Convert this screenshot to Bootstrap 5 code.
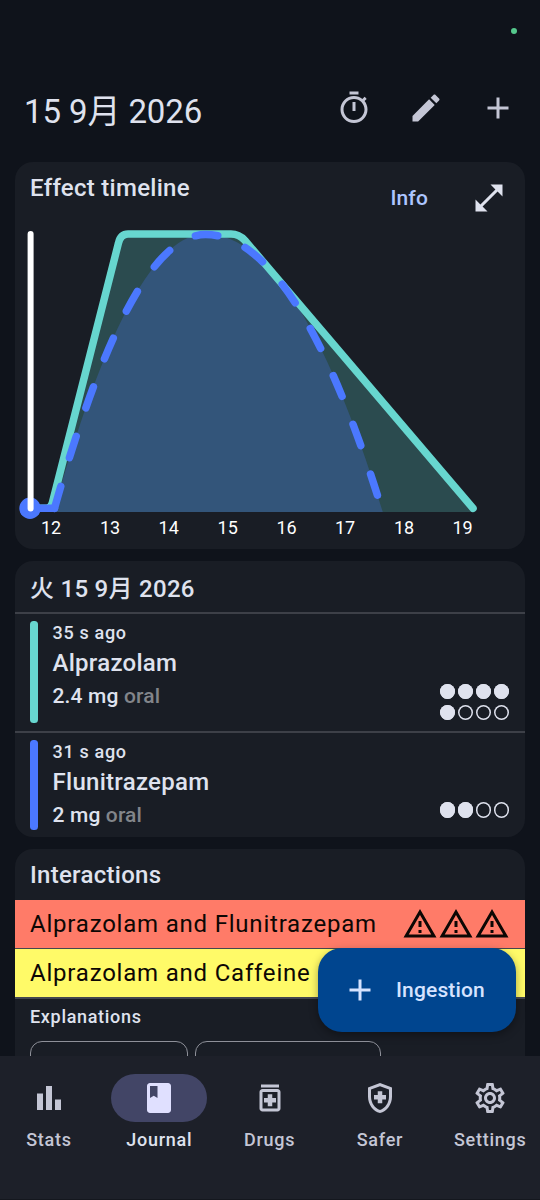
<!DOCTYPE html>
<html lang="en">
<head>
<meta charset="utf-8">
<meta name="viewport" content="width=device-width, initial-scale=1">
<title>Journal</title>
<link rel="stylesheet" href="https://cdn.jsdelivr.net/npm/bootstrap@5.3.0/dist/css/bootstrap.min.css">
<style>
  body { background:#0f131b; color:#dfe2ee; font-family:Roboto,"Noto Sans CJK JP",sans-serif; font-size:24px; line-height:36px; }
  .screen { height:1200px; }
  .ico { width:36px; height:36px; fill:currentColor; display:block; flex:none; }
  .status { height:54px; padding:28px 23px 0 0; }
  .status i { width:6px; height:6px; border-radius:50%; background:#55c98d; }
  .topbar { height:108px; padding:0 24px; color:#c4c6d5; }
  .topbar h1 { font-size:33px; font-weight:400; line-height:42px; letter-spacing:-.1px; color:#dfe2ee; padding-top:7px; }
  .topbar .actions { gap:36px; }
  .panel { background:#191d25; border-radius:18px; overflow:hidden; }
  .t-title { font-size:24px; font-weight:500; letter-spacing:.28px; line-height:36px; }
  .t-label { font-size:18px; font-weight:500; letter-spacing:.68px; line-height:24px; }
  .t-small { font-size:21px; font-weight:500; letter-spacing:.15px; line-height:30px; }
  .chart-head { height:58px; padding:8px 18px 0 15px; }
  .chart { width:510px; height:329px; display:block; }
  .chart text { font-size:18px; fill:#fff; text-anchor:middle; }
  .day-head { height:51px; padding:10px 15px 0; }
  .dose { border-top:2px solid #3d4048; padding:7px 15px 7.5px; }
  .dose .stripe { width:7.5px; border-radius:3.5px; margin-right:15px; }
  .route { color:#82858a; }
  .dots { display:grid; grid-template-columns:repeat(4,15.5px); gap:5.5px 2.5px; }
  .dots i { width:15.5px; height:15.5px; border-radius:50%; box-shadow:inset 0 0 0 1.5px #dfe2ee; }
  .dots i.on { background:#dfe2ee; }
  .pair { height:48px; padding:0 15px; color:#0d0704; letter-spacing:.79px; }
  .pair.danger { background:#ff7b68; }
  .pair.caution { background:#fffa68; }
  .rule { height:1.5px; background:#44474f; }
  .chip { height:48px; border:1.5px solid #8e9099; border-radius:12px; }
  .fab { right:24px; bottom:168px; width:198px; height:84px; border-radius:24px; background:#00458f; color:#d6e3ff; box-shadow:0 3px 9px rgba(0,0,0,.35); padding-left:24px; gap:18px; }
  .bottom { height:144px; background:#1d2029; color:#c4c6d5; padding-top:18px; border-bottom:1px solid #14171e; }
  .bottom .tabs { display:grid; grid-template-columns:repeat(5,98px); column-gap:12.3px; }
  .bottom .t-label { letter-spacing:.75px; }
  .pill { width:96px; height:48px; border-radius:24px; }
  .active-tab { color:#dfe2ee; }
  .active-tab .pill { background:#424566; color:#e0e0ff; }
</style>
</head>
<body>
<div class="screen position-relative overflow-hidden d-flex flex-column">
  <div class="status d-flex justify-content-end"><i></i></div>
  <header class="topbar d-flex justify-content-between align-items-center">
    <h1 class="mb-0">15 9月 2026</h1>
    <div class="actions d-flex">
      <svg class="ico" viewBox="0 0 24 24"><path d="M15 1H9v2h6V1zm-4 13h2V8h-2v6zm8.03-6.61 1.42-1.42c-.43-.51-.9-.99-1.41-1.41l-1.42 1.42C16.07 4.74 14.12 4 12 4c-4.97 0-9 4.03-9 9s4.02 9 9 9 9-4.03 9-9c0-2.12-.74-4.07-1.97-5.61zM12 20c-3.87 0-7-3.13-7-7s3.13-7 7-7 7 3.13 7 7-3.13 7-7 7z"/></svg>
      <svg class="ico" viewBox="0 0 24 24"><path d="M3 17.25V21h3.75L17.81 9.94l-3.75-3.75L3 17.25zM20.71 7.04c.39-.39.39-1.02 0-1.41l-2.34-2.34c-.39-.39-1.02-.39-1.41 0l-1.83 1.83 3.75 3.75 1.83-1.83z"/></svg>
      <svg class="ico" viewBox="0 0 24 24"><path d="M19 13h-6v6h-2v-6H5v-2h6V5h2v6h6z"/></svg>
    </div>
  </header>

  <main class="d-flex flex-column" style="gap:12px;padding:0 15px">
    <section class="panel flex-shrink-0">
      <div class="chart-head d-flex justify-content-between">
        <div class="t-title">Effect timeline</div>
        <div class="d-flex" style="gap:43px;padding-top:10px">
          <div class="t-small" style="color:#adc6ff;line-height:36px">Info</div>
          <svg class="ico" viewBox="0 0 24 24"><path d="M21 11V3h-8l3.29 3.29-10 10L3 13v8h8l-3.29-3.29 10-10z"/></svg>
        </div>
      </div>
      <svg class="chart" viewBox="15 220 510 329">
        <path fill="#2b4b4f" d="M30 512V508H51L118 246Q121 234 129 234H232Q240 234 246 241L473 508V512Z"/>
        <path fill="#33557a" d="M30 512V508H54.5Q131.5 234 205.500 234Q297 234 381.5 508L382.8 512Z"/>
        <g fill="none" stroke-width="7.5" stroke-linecap="round">
          <path stroke="#67d6cf" d="M30 508.3H46.500Q51 508.300 52.300 503L118.500 243Q120.500 234 128 234H231Q239 234 245 240.500L473 508.300"/>
          <path stroke="#4b78ff" d="M30 508.300H54.500"/>
          <path stroke="#4b78ff" stroke-dasharray="22.500 30" d="M54.500 508.300Q131.500 234.500 205.500 234.500Q297 234.500 381.500 508.300"/>
        </g>
        <circle cx="30" cy="508.300" r="10.700" fill="#4b78ff"/>
        <path d="M30.600 234V508.500" stroke="#fff" stroke-width="6" stroke-linecap="round"/>
        <g>
          <text x="51" y="534">12</text><text x="110" y="534">13</text><text x="168.700" y="534">14</text><text x="227.700" y="534">15</text>
          <text x="286.500" y="534">16</text><text x="345" y="534">17</text><text x="404" y="534">18</text><text x="462.500" y="534">19</text>
        </g>
      </svg>
    </section>

    <section class="panel flex-shrink-0">
      <div class="day-head t-title">火 15 9月 2026</div>
      <div class="dose d-flex" style="height:118.5px">
        <div class="stripe" style="background:#67d6cf"></div>
        <div class="flex-grow-1">
          <div class="t-label">35 s ago</div>
          <div class="t-title">Alprazolam</div>
          <div class="t-small">2.4 mg <span class="route">oral</span></div>
        </div>
        <div class="dots align-self-end" style="margin:0 1px 3px 0"><i class="on"></i><i class="on"></i><i class="on"></i><i class="on"></i><i class="on"></i><i></i><i></i><i></i></div>
      </div>
      <div class="dose d-flex" style="height:106.5px">
        <div class="stripe" style="background:#4b78ff"></div>
        <div class="flex-grow-1">
          <div class="t-label">31 s ago</div>
          <div class="t-title">Flunitrazepam</div>
          <div class="t-small">2 mg <span class="route">oral</span></div>
        </div>
        <div class="dots align-self-end" style="margin:0 1px 12px 0"><i class="on"></i><i class="on"></i><i></i><i></i></div>
      </div>
    </section>

    <section class="panel flex-shrink-0">
      <div class="t-title" style="height:51px;padding:8px 15px 0">Interactions</div>
      <div class="pair danger d-flex align-items-center justify-content-between">
        <span>Alprazolam and Flunitrazepam</span>
        <span class="d-flex">
          <svg class="ico" viewBox="0 0 24 24"><path d="M12 5.990 19.530 19H4.470L12 5.990M12 2 1 21h22L12 2zm1 14h-2v2h2v-2zm0-6h-2v4h2v-4z"/></svg>
          <svg class="ico" viewBox="0 0 24 24"><path d="M12 5.990 19.530 19H4.470L12 5.990M12 2 1 21h22L12 2zm1 14h-2v2h2v-2zm0-6h-2v4h2v-4z"/></svg>
          <svg class="ico" viewBox="0 0 24 24"><path d="M12 5.990 19.530 19H4.470L12 5.990M12 2 1 21h22L12 2zm1 14h-2v2h2v-2zm0-6h-2v4h2v-4z"/></svg>
        </span>
      </div>
      <div class="rule" style="height:1px"></div>
      <div class="pair caution d-flex align-items-center">Alprazolam and Caffeine</div>
      <div class="rule"></div>
      <div class="t-label" style="padding:6.5px 15px 12px">Explanations</div>
      <div class="d-flex" style="gap:7px;padding:0 15px 30px">
        <div class="chip" style="width:158px"></div>
        <div class="chip" style="width:186px"></div>
      </div>
    </section>
  </main>

  <div class="fab position-absolute d-flex align-items-center t-small">
    <svg class="ico" viewBox="0 0 24 24"><path d="M19 13h-6v6h-2v-6H5v-2h6V5h2v6h6z"/></svg>
    <span>Ingestion</span>
  </div>

  <nav class="bottom position-absolute bottom-0 start-0 w-100">
    <div class="tabs text-center t-label">
      <div class="d-flex flex-column align-items-center gap-1">
        <span class="pill d-flex align-items-center justify-content-center"><svg class="ico" viewBox="0 0 24 24"><path d="M4 9h4v11H4zm12 4h4v7h-4zm-6-9h4v16h-4z"/></svg></span>
        <span style="padding-top:2px">Stats</span>
      </div>
      <div class="active-tab d-flex flex-column align-items-center gap-1">
        <span class="pill d-flex align-items-center justify-content-center"><svg class="ico" viewBox="0 0 24 24"><path d="M18 2H6c-1.100 0-2 .9-2 2v16c0 1.100.9 2 2 2h12c1.100 0 2-.9 2-2V4c0-1.100-.9-2-2-2zM6 4h5v8l-2.500-1.500L6 12V4z"/></svg></span>
        <span style="padding-top:2px">Journal</span>
      </div>
      <div class="d-flex flex-column align-items-center gap-1">
        <span class="pill d-flex align-items-center justify-content-center"><svg class="ico" viewBox="0 0 24 24"><path d="M6 3h12v2H6zM17 6H7c-1.100 0-2 .9-2 2v11c0 1.100.9 2 2 2h10c1.100 0 2-.9 2-2V8c0-1.100-.9-2-2-2zm0 13H7V8h10v11zM10.500 9.500h3V12H16v3h-2.500v2.500h-3V15H8v-3h2.500z"/></svg></span>
        <span style="padding-top:2px">Drugs</span>
      </div>
      <div class="d-flex flex-column align-items-center gap-1">
        <span class="pill d-flex align-items-center justify-content-center"><svg class="ico" viewBox="0 0 24 24"><path d="M10.500 13H8v-3h2.500V7.500h3V10H16v3h-2.500v2.500h-3V13zM12 2 4 5v6.090c0 5.050 3.410 9.760 8 10.910 4.590-1.150 8-5.860 8-10.910V5l-8-3zm6 9.090c0 4-2.550 7.700-6 8.830-3.450-1.130-6-4.820-6-8.830v-4.700l6-2.250 6 2.250v4.700z"/></svg></span>
        <span style="padding-top:2px">Safer</span>
      </div>
      <div class="d-flex flex-column align-items-center gap-1">
        <span class="pill d-flex align-items-center justify-content-center"><svg class="ico" viewBox="0 0 24 24"><path d="M19.430 12.980c.04-.32.07-.64.07-.98 0-.34-.03-.66-.07-.98l2.110-1.650c.19-.15.24-.42.12-.64l-2-3.460c-.09-.16-.26-.25-.44-.25-.06 0-.12.01-.17.03l-2.490 1c-.52-.4-1.080-.73-1.690-.98l-.38-2.650C14.460 2.180 14.250 2 14 2h-4c-.25 0-.46.18-.49.42l-.38 2.650c-.61.25-1.170.59-1.690.98l-2.490-1c-.06-.02-.12-.03-.18-.03-.17 0-.34.09-.43.25l-2 3.460c-.13.22-.07.49.12.64l2.110 1.650c-.04.32-.07.65-.07.98 0 .33.03.66.07.98l-2.110 1.650c-.19.15-.24.42-.12.64l2 3.460c.09.16.26.25.44.25.06 0 .12-.01.17-.03l2.490-1c.52.4 1.080.73 1.690.98l.38 2.650c.03.24.24.42.49.42h4c.25 0 .46-.18.49-.42l.38-2.650c.61-.25 1.170-.59 1.690-.98l2.490 1c.06.02.12.03.18.03.17 0 .34-.09.43-.25l2-3.460c.12-.22.07-.49-.12-.64l-2.110-1.650zm-1.980-1.710c.04.31.05.52.05.73 0 .21-.02.43-.05.73l-.14 1.130.89.7 1.080.84-.7 1.210-1.270-.51-1.040-.42-.9.68c-.43.32-.84.56-1.250.73l-1.060.43-.16 1.130-.2 1.350h-1.400l-.19-1.350-.16-1.130-1.060-.43c-.43-.18-.83-.41-1.230-.71l-.91-.7-1.060.43-1.270.51-.7-1.210 1.080-.84.89-.7-.14-1.130c-.03-.31-.05-.54-.05-.74s.02-.43.05-.73l.14-1.130-.89-.7-1.080-.84.7-1.210 1.270.51 1.040.42.9-.68c.43-.32.84-.56 1.250-.73l1.060-.43.16-1.130.2-1.350h1.390l.19 1.350.16 1.130 1.060.43c.43.18.83.41 1.230.71l.91.7 1.060-.43 1.270-.51.7 1.210-1.070.85-.89.7.14 1.130zM12 8c-2.210 0-4 1.790-4 4s1.790 4 4 4 4-1.790 4-4-1.790-4-4-4zm0 6c-1.100 0-2-.9-2-2s.9-2 2-2 2 .9 2 2-.9 2-2 2z"/></svg></span>
        <span style="padding-top:2px">Settings</span>
      </div>
    </div>
  </nav>
</div>
<script src="https://cdn.jsdelivr.net/npm/bootstrap@5.3.0/dist/js/bootstrap.bundle.min.js"></script>
</body>
</html>
